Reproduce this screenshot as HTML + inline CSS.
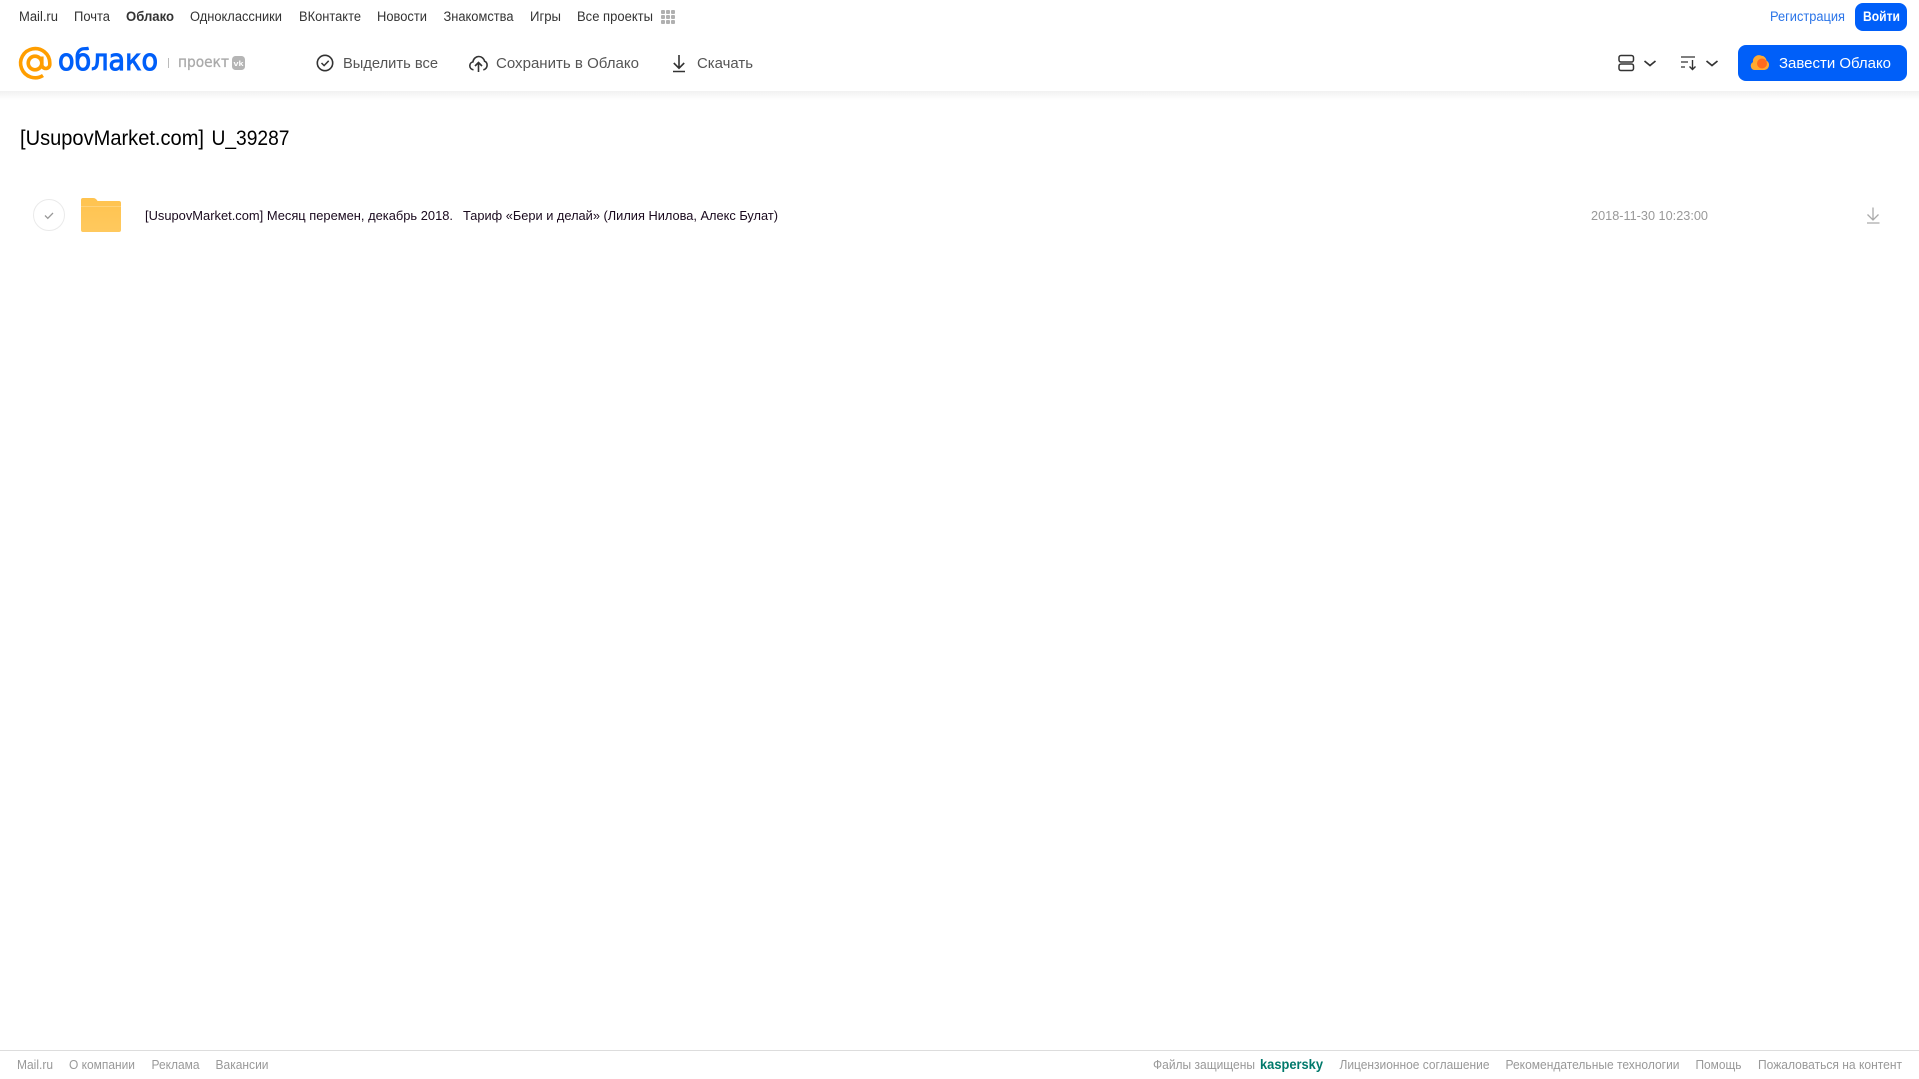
<!DOCTYPE html>
<html lang="ru"><head><meta charset="utf-8"><title>Облако</title>
<style>
html,body{margin:0;padding:0;background:#fff;width:1919px;height:1079px;overflow:hidden}
svg{display:block;position:absolute;left:0;top:0}
text{font-family:"Liberation Sans",sans-serif}
.n{font-size:13.5px;fill:#333}
.t{font-size:15px;fill:#555}
.f{font-size:12.5px;fill:#999}
</style></head><body>
<svg width="1919" height="1079" viewBox="0 0 1919 1079" xmlns="http://www.w3.org/2000/svg">
<defs>
<linearGradient id="sh" x1="0" y1="0" x2="0" y2="1"><stop offset="0" stop-color="#f1f1f1"/><stop offset="1" stop-color="#fff"/></linearGradient>
<linearGradient id="fo" x1="0" y1="0" x2="0" y2="1"><stop offset="0" stop-color="#ffc34f"/><stop offset="1" stop-color="#ffc95e"/></linearGradient>
</defs>
<rect x="0" y="91" width="1919" height="9" fill="url(#sh)"/>

<!-- top nav -->
<text class="n" x="19" y="21" textLength="39" lengthAdjust="spacingAndGlyphs">Mail.ru</text>
<text class="n" x="74" y="21" textLength="36" lengthAdjust="spacingAndGlyphs">Почта</text>
<text class="n" x="126" y="21" textLength="48" lengthAdjust="spacingAndGlyphs" font-weight="700">Облако</text>
<text class="n" x="190" y="21" textLength="92" lengthAdjust="spacingAndGlyphs">Одноклассники</text>
<text class="n" x="299" y="21" textLength="62" lengthAdjust="spacingAndGlyphs">ВКонтакте</text>
<text class="n" x="377" y="21" textLength="50" lengthAdjust="spacingAndGlyphs">Новости</text>
<text class="n" x="443.500" y="21" textLength="70" lengthAdjust="spacingAndGlyphs">Знакомства</text>
<text class="n" x="530" y="21" textLength="31" lengthAdjust="spacingAndGlyphs">Игры</text>
<text class="n" x="577" y="21" textLength="76" lengthAdjust="spacingAndGlyphs">Все проекты</text>
<g fill="#b0b0b0">
<rect x="661" y="10" width="4" height="4" rx="1"/><rect x="666" y="10" width="4" height="4" rx="1"/><rect x="671" y="10" width="4" height="4" rx="1"/>
<rect x="661" y="15" width="4" height="4" rx="1"/><rect x="666" y="15" width="4" height="4" rx="1"/><rect x="671" y="15" width="4" height="4" rx="1"/>
<rect x="661" y="20" width="4" height="4" rx="1"/><rect x="666" y="20" width="4" height="4" rx="1"/><rect x="671" y="20" width="4" height="4" rx="1"/>
</g>
<text class="n" x="1770" y="21" textLength="75" lengthAdjust="spacingAndGlyphs" style="fill:#2a74e8">Регистрация</text>
<rect x="1855" y="3" width="52" height="28" rx="8" fill="#005ff9"/>
<text x="1863" y="21" font-size="13.500" font-weight="700" fill="#fff" textLength="37" lengthAdjust="spacingAndGlyphs">Войти</text>

<!-- logo -->
<g fill="none" stroke="#ff9e00" stroke-width="3.600">
<circle cx="35" cy="63" r="6.800"/>
<path d="M41.800 56.500V64.500a4 4 0 0 0 8 0V63A14.600 14.600 0 1 0 43 75.500"/>
</g>
<text x="58" y="70" font-size="29" fill="#005ff9" stroke="#005ff9" stroke-width="1" textLength="100" lengthAdjust="spacingAndGlyphs" style='font-family:"DejaVu Sans",sans-serif'>облако</text>
<rect x="168" y="58" width="1" height="10" fill="#bbb"/>
<text x="178" y="67" font-size="15" fill="#aaa" stroke="#aaa" stroke-width=".3" textLength="51" lengthAdjust="spacingAndGlyphs" style='font-family:"DejaVu Sans",sans-serif'>проект</text>
<rect x="232" y="56" width="13" height="14" rx="3.500" fill="#b5b5b5"/>
<text x="233.500" y="66" font-size="7" font-weight="700" fill="#fff" textLength="10" lengthAdjust="spacingAndGlyphs">vk</text>

<!-- toolbar -->
<circle cx="325" cy="63" r="7.700" fill="none" stroke="#333" stroke-width="1.600"/>
<path d="M321.500 63l2.600 2.600 4.600-4.800" fill="none" stroke="#333" stroke-width="1.500"/>
<text class="t" x="343" y="68" textLength="95" lengthAdjust="spacingAndGlyphs">Выделить все</text>

<path d="M473.500 69.800c-2.200-.2-3.700-1.900-3.700-4 0-1.900 1.300-3.500 3.100-3.900.5-3.200 3-5.400 5.900-5.400 2.800 0 5.200 2 5.800 4.800 1.500.5 2.500 2.100 2.500 3.900 0 2.400-1.600 4.300-3.800 4.600" fill="none" stroke="#333" stroke-width="1.600"/>
<path d="M478.500 72v-9.500M475 66l3.500-3.500 3.500 3.500" fill="none" stroke="#333" stroke-width="1.600"/>
<text class="t" x="496" y="68" textLength="143" lengthAdjust="spacingAndGlyphs">Сохранить в Облако</text>

<path d="M679 55v13M673.800 63l5.200 5.200 5.200-5.200M673 71.500h12" fill="none" stroke="#333" stroke-width="1.600"/>
<text class="t" x="697" y="68" textLength="56" lengthAdjust="spacingAndGlyphs">Скачать</text>

<!-- view / sort -->
<rect x="1619" y="55.500" width="14.500" height="6.500" rx="2" fill="none" stroke="#333" stroke-width="1.500"/>
<rect x="1619" y="64" width="14.500" height="6.500" rx="2" fill="none" stroke="#333" stroke-width="1.500"/>
<path d="M1644.500 61l5.500 4.500 5.500-4.500" fill="none" stroke="#333" stroke-width="1.700"/>
<path d="M1681 57h14M1681 62h7M1681 67h4" fill="none" stroke="#333" stroke-width="1.300"/>
<path d="M1692.500 60v9M1689.500 66.500l3 3 3-3" fill="none" stroke="#333" stroke-width="1.400"/>
<path d="M1706.500 61l5.500 4.500 5.500-4.500" fill="none" stroke="#333" stroke-width="1.700"/>

<!-- CTA -->
<rect x="1738" y="45" width="169" height="36" rx="8" fill="#005ff9"/>
<path d="M1755 70a4.200 4.200 0 0 1-2-7.900a6 6 0 0 1 8.500-6.300a5.200 5.200 0 0 1 5 5a4.600 4.600 0 0 1 2.500 4.500a4.800 4.800 0 0 1-4.500 4.700z" fill="#ffa930"/>
<circle cx="1762" cy="63.500" r="5" fill="#ff6a1e"/>
<text x="1779" y="68" font-size="15" fill="#fff" textLength="112" lengthAdjust="spacingAndGlyphs">Завести Облако</text>

<!-- title -->
<text x="20" y="145" font-size="21" fill="#000" textLength="184" lengthAdjust="spacingAndGlyphs">[UsupovMarket.com]</text>
<text x="211.500" y="145" font-size="21" fill="#000" textLength="78" lengthAdjust="spacingAndGlyphs">U_39287</text>

<!-- row -->
<circle cx="49" cy="215" r="15.500" fill="#fff" stroke="#eaeaea" stroke-width="1"/>
<path d="M45 215.500l2.800 2.800 5.200-5.300" fill="none" stroke="#999" stroke-width="1.300"/>
<path d="M81 200a2 2 0 0 1 2-2h10c2 0 3 .8 4 2.200l.6.800H119a2 2 0 0 1 2 2v27a2 2 0 0 1-2 2H83a2 2 0 0 1-2-2z" fill="url(#fo)"/>
<rect x="81" y="206" width="40" height="1" fill="#ffd27a"/>
<text x="145" y="220" font-size="13" fill="#1a0a1e" textLength="308" lengthAdjust="spacingAndGlyphs">[UsupovMarket.com] Месяц перемен, декабрь 2018.</text>
<text x="463" y="220" font-size="13" fill="#1a0a1e" textLength="315" lengthAdjust="spacingAndGlyphs">Тариф «Бери и делай» (Лилия Нилова, Алекс Булат)</text>
<text x="1591" y="220" font-size="13" fill="#999" textLength="117" lengthAdjust="spacingAndGlyphs">2018-11-30 10:23:00</text>
<path d="M1873 207.500v12M1867.500 214.500l5.500 5.500 5.500-5.500M1867 223h12.500" fill="none" stroke="#aaa" stroke-width="1.300"/>

<!-- footer -->
<rect x="0" y="1050" width="1919" height="1" fill="#ddd"/>
<text class="f" x="17" y="1069" textLength="36" lengthAdjust="spacingAndGlyphs">Mail.ru</text>
<text class="f" x="69" y="1069" textLength="66" lengthAdjust="spacingAndGlyphs">О компании</text>
<text class="f" x="151.500" y="1069" textLength="48" lengthAdjust="spacingAndGlyphs">Реклама</text>
<text class="f" x="215.500" y="1069" textLength="53" lengthAdjust="spacingAndGlyphs">Вакансии</text>
<text class="f" x="1153" y="1069" textLength="102" lengthAdjust="spacingAndGlyphs">Файлы защищены</text>
<text x="1260" y="1069" font-size="13.500" font-weight="700" fill="#00796b" textLength="63" lengthAdjust="spacingAndGlyphs">kaspersky</text>
<text class="f" x="1339.500" y="1069" textLength="150" lengthAdjust="spacingAndGlyphs">Лицензионное соглашение</text>
<text class="f" x="1505.500" y="1069" textLength="174" lengthAdjust="spacingAndGlyphs">Рекомендательные технологии</text>
<text class="f" x="1695.500" y="1069" textLength="46" lengthAdjust="spacingAndGlyphs">Помощь</text>
<text class="f" x="1758" y="1069" textLength="144" lengthAdjust="spacingAndGlyphs">Пожаловаться на контент</text>
</svg>
</body></html>
